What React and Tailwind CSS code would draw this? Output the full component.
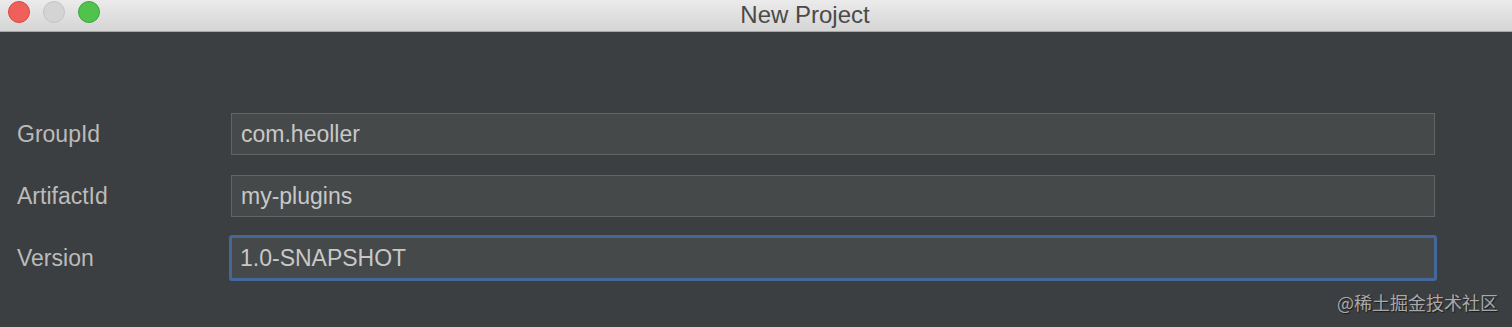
export default function App() {
  const rows = [
    { label: "GroupId", value: "com.heoller" },
    { label: "ArtifactId", value: "my-plugins" },
    { label: "Version", value: "1.0-SNAPSHOT", focused: true },
  ];

  return (
    <div
      className="relative h-[327px] w-[1512px] overflow-hidden bg-[#3c3f41]"
      style={{ fontFamily: '"Liberation Sans", Arial, sans-serif' }}
    >
      {/* Title bar */}
      <div className="relative flex h-[32px] items-center border-b border-[#a8a8a8] bg-gradient-to-b from-[#ebebeb] to-[#d5d5d5]">
        <div className="absolute left-[8px] top-[1px] flex gap-[13px]">
          <span className="h-[22px] w-[22px] rounded-full border border-[#e0443e] bg-[#f0605a]" />
          <span className="h-[22px] w-[22px] rounded-full border border-[#c4c4c4] bg-[#d4d4d4]" />
          <span className="h-[22px] w-[22px] rounded-full border border-[#3aa63a] bg-[#50c34c]" />
        </div>
        <div className="w-full pb-[2px] pl-[98px] text-center text-[24px] leading-none text-[#4a4a4a]">New Project</div>
      </div>

      {/* Form */}
      <div className="flex flex-col gap-[20px] pl-[17px] pr-[77px] pt-[81px]">
        {rows.map((r) => (
          <div key={r.label} className="flex items-center">
            <div className="w-[214px] text-[23px] text-[#bbbbbb]">{r.label}</div>
            {r.focused ? (
              <div className="-mx-[2px] -my-[2px] flex h-[46px] flex-1 items-center rounded-[3px] border-[3px] border-[#44689a] bg-[#45494a] pl-[8px] text-[23px] text-[#c8c8c8]">
                {r.value}
              </div>
            ) : (
              <div className="flex h-[42px] flex-1 items-center border border-[#646464] bg-[#45494a] pl-[9px] text-[23px] text-[#c8c8c8]">
                {r.value}
              </div>
            )}
          </div>
        ))}
      </div>

      {/* Watermark */}
      <div
        className="absolute right-[14px] top-[289px] text-[18px] text-[#a9a9a9] [text-shadow:1px_1px_1px_rgba(0,0,0,0.6)]"
        style={{ fontFamily: '"Noto Sans CJK SC", sans-serif' }}
      >
        @稀土掘金技术社区
      </div>
    </div>
  );
}
